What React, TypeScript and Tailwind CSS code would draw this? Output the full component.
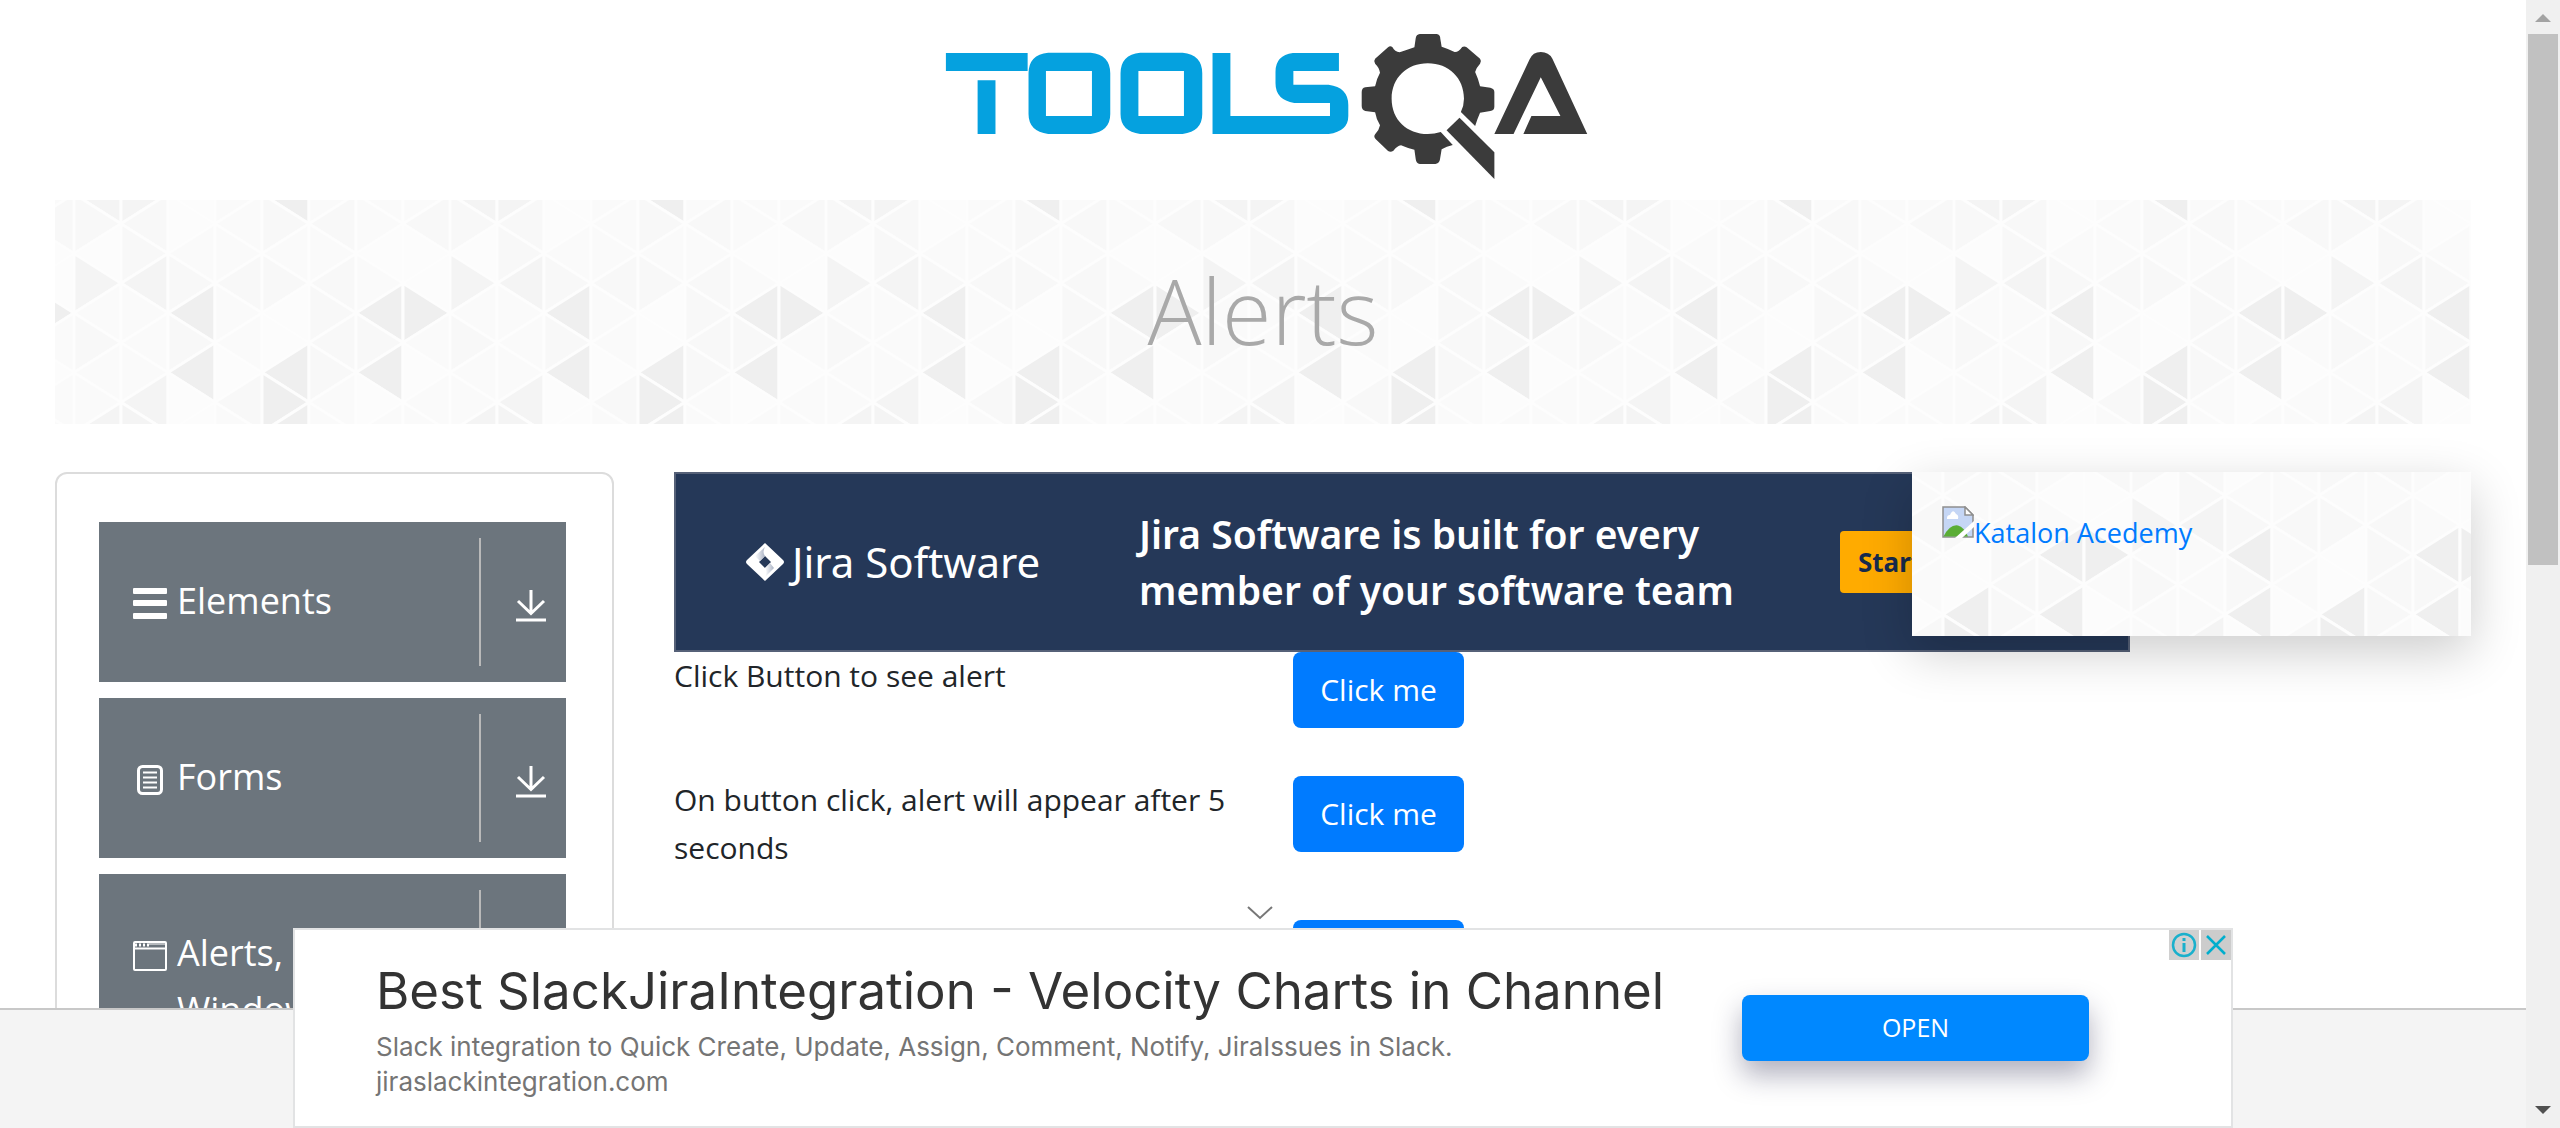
import React from "react";

const SHADES = ["#fcfcfc", "#fafafa", "#f8f8f8", "#f4f4f4", "#efefef"];

/* One entry per strip of the triangle tile, top to bottom. */
const STRIPS = [
  [3, 2, 0, 3, 1, 2, 1, 1],
  [3, 2, 2, 3, 1, 1, 1, 3],
  [0, 0, 1, 2, 4, 2, 4, 0],
  [1, 1, 1, 2, 1, 1, 0, 2],
  [4, 2, 1, 2, 0, 0, 4, 4],
  [1, 2, 1, 2, 2, 2, 2, 1],
  [1, 1, 0, 1, 4, 2, 4, 0],
  [1, 2, 0, 0, 4, 1, 0, 1],
];

function Triangles({ id, x, y }: { id: string; x: number; y: number }) {
  const w = 47;
  const h = 29.75;
  return (
    <svg className="absolute inset-0 h-full w-full" aria-hidden="true">
      <defs>
        <pattern id={id} x={x} y={y} width={w * 8} height={h * 8} patternUnits="userSpaceOnUse">
          <rect width={w * 8} height={h * 8} fill="#fcfcfc" />
          {STRIPS.map((strip, i) =>
            [...strip, strip[0]].map((shade, j) => {
              const near = i * w;
              const far = near + w;
              const [apex, base] = (i + j) % 2 === 0 ? [near, far] : [far, near];
              return (
                <path
                  key={`${i}-${j}`}
                  d={`M${apex} ${j * h}L${base} ${(j - 1) * h}V${(j + 1) * h}Z`}
                  fill={SHADES[shade]}
                  stroke="#fdfdfd"
                  strokeWidth="3"
                />
              );
            })
          )}
        </pattern>
      </defs>
      <rect width="100%" height="100%" fill={`url(#${id})`} />
    </svg>
  );
}

function Logo() {
  return (
    <svg viewBox="0 0 1536 510" preserveAspectRatio="none" className="h-[170px] w-[686px]" role="img" aria-label="ToolsQA">
      <g fill="#05a1df" fillRule="evenodd">
        <path d="M58 99H241V153H58ZM129 181H169V342H129Z" />
        <path d="M287 98H382Q426 104 426 160V282Q426 334 382 342H287Q243 334 243 282V160Q243 104 287 98ZM282 153V288H385V153Z" />
        <path d="M493 98H588Q632 104 632 160V282Q632 334 588 342H493Q449 334 449 282V160Q449 104 493 98ZM489 153V288H591V153Z" />
        <path d="M655 99H695V288H918V249H838Q796 240 796 190V155Q796 106 835 99H938V153H836V194H915Q959 202 959 255V288Q959 334 915 342H655Z" />
      </g>
      <g fill="#3b3b3b">
        <path
          fillRule="evenodd"
          d="M1119 42H1157Q1165 44 1165 56L1168 80Q1182 86 1197 96Q1206 97 1214 81Q1219 77 1224 82L1254 116Q1258 123 1254 131Q1246 142 1243 156Q1250 176 1254 199L1277 203Q1286 206 1286 216V260Q1286 271 1277 273L1254 278Q1248 296 1243 318L1211 276Q1218 257 1218 236C1218 174 1184 130 1137 130C1090 130 1056 174 1056 236C1056 299 1090 342 1137 342Q1152 342 1166 336L1193 375Q1179 379 1168 388L1164 420Q1162 431 1154 432H1119Q1111 430 1110 418L1107 389Q1090 384 1077 376Q1068 378 1060 392Q1054 398 1048 393L1020 357Q1015 350 1019 343Q1028 331 1030 316Q1022 300 1019 277L997 273Q989 270 989 258V216Q989 204 997 202L1019 199Q1022 177 1030 158Q1028 142 1019 131Q1015 123 1019 116L1048 82Q1053 76 1058 82Q1063 95 1074 97Q1090 90 1107 82L1110 54Q1111 44 1119 42Z"
        />
        <path d="M1208 293L1286 397V477L1179 331Z" />
        <path d="M1365 118Q1372 96 1390 96Q1408 96 1416 116L1494 342H1351L1369 288H1434L1390 172L1329 342H1286Z" />
      </g>
    </svg>
  );
}

function MenuIcon() {
  return (
    <svg viewBox="0 0 34 32" className="h-8 w-[34px]" fill="#fff" aria-hidden="true">
      <rect y="0" width="34" height="6" rx="1" />
      <rect y="12" width="34" height="6" rx="1" />
      <rect y="25" width="34" height="6" rx="1" />
    </svg>
  );
}

function FormIcon() {
  return (
    <svg viewBox="0 0 34 32" className="h-8 w-[34px]" fill="none" stroke="#fff" aria-hidden="true">
      <rect x="5.5" y="2.5" width="23" height="27" rx="4" strokeWidth="3" />
      <path d="M10 8.5H24M10 13.5H24M10 18.5H24M10 23.5H24" strokeWidth="2" />
    </svg>
  );
}

function WindowIcon() {
  return (
    <svg viewBox="0 0 34 32" className="h-8 w-[34px]" fill="none" stroke="#fff" aria-hidden="true">
      <rect x="1" y="2" width="32" height="28" rx="1" strokeWidth="2" />
      <path d="M1 8.5H33" strokeWidth="2" />
      <path d="M2 5H16" strokeWidth="3" strokeDasharray="2 2" />
      <path d="M16 4H32" strokeWidth="1" />
    </svg>
  );
}

function DownloadIcon() {
  return (
    <svg viewBox="0 0 30 32" className="h-8 w-[30px]" fill="none" stroke="#fff" strokeWidth="3" aria-hidden="true">
      <path d="M15 0V23M2 11L15 23.500L28 11M0 30H30" />
    </svg>
  );
}

function SideItem({ icon, label }: { icon: React.ReactNode; label: string }) {
  return (
    <button type="button" className="flex h-40 w-full shrink-0 items-start overflow-hidden bg-[#6c757d] text-left text-white">
      <span className="flex h-full flex-1 items-start gap-[10px] pl-[34px]">
        <span className="flex h-40 items-center pt-1">{icon}</span>
        <span className="flex-1 pt-[50px] text-[36px] leading-[57px]">{label}</span>
      </span>
      <span className="my-4 h-32 w-[2px] bg-[#b9b9b9]" />
      <span className="flex h-40 w-[85px] items-center justify-end pt-2 pr-5">
        <DownloadIcon />
      </span>
    </button>
  );
}

const ROWS = ["Click Button to see alert", "On button click, alert will appear after 5 seconds"];

function JiraBanner() {
  return (
    <a href="#jira" className="flex h-[180px] w-[1456px] items-center border-2 border-[#566178] bg-[#253858] font-['Noto_Sans',sans-serif] text-white">
      <span className="flex w-[463px] items-center gap-2 pl-[70px]">
        <svg viewBox="0 0 38 38" className="h-[38px] w-[38px]" aria-hidden="true">
          <defs>
            <linearGradient id="fold" x1="0" y1="0" x2="1" y2="0">
              <stop offset="0" stopColor="#fff" />
              <stop offset="1" stopColor="#a9b2c4" />
            </linearGradient>
          </defs>
          <path fillRule="evenodd" fill="#fff" d="M19 0L37 17Q39 19 37 21L19 38L1 21Q-1 19 1 17ZM19 13L13 19L19 25L25 19Z" />
          <path d="M19 4Q16 9 19 13L14 18L9 13Z" fill="url(#fold)" />
          <path d="M19 25L24 20L28 25L19 34Q22 29 19 25Z" fill="url(#fold)" />
        </svg>
        <span className="text-[42px] leading-[56px] whitespace-nowrap">Jira Software</span>
      </span>
      <span className="w-[701px] text-[39px] leading-[56px] font-semibold whitespace-nowrap">
        Jira Software is built for every
        <br />
        member of your software team
      </span>
      <span className="flex h-[62px] w-[220px] items-center rounded-sm bg-[#ffab00] pl-[18px] text-[26px] font-bold text-[#172b4d]">Start</span>
    </a>
  );
}

function BrokenImage() {
  return (
    <svg viewBox="0 0 32 32" className="h-8 w-8" aria-hidden="true">
      <path d="M1 1H23L31 9V31H1Z" fill="#c5d6f5" stroke="#8f8f8f" strokeWidth="1.500" />
      <path d="M5 12Q5 9 8 9Q11 2 14 8Q17 9 16 13H5Z" fill="#fff" />
      <path d="M1.500 30.500Q8 18 16 19.500Q22 21 26 30.500Z" fill="#5aad35" />
      <path d="M23 1V9H31Z" fill="#fff" stroke="#8f8f8f" strokeWidth="1.500" />
      <path d="M32 15V21L20 32H13Z" fill="#fff" />
    </svg>
  );
}

function BottomAd() {
  return (
    <aside className="absolute inset-x-0 bottom-0 mx-auto flex h-[200px] w-[1940px] max-w-full items-center border-2 border-[#e2e3e4] bg-white">
      <button type="button" aria-label="Collapse" className="absolute -top-6 right-1.5 left-0 mx-auto flex w-8 justify-center">
        <svg viewBox="0 0 26 14" className="h-[14px] w-[26px]" fill="none" stroke="#777" strokeWidth="2" aria-hidden="true">
          <path d="M1 1L13 12L25 1" />
        </svg>
      </button>
      <div className="min-w-0 flex-1 pl-[81px] font-['Inter',sans-serif]">
        <h2 className="pt-1 text-[51px] leading-[60px] whitespace-nowrap text-[#333]">Best SlackJiraIntegration - Velocity Charts in Channel</h2>
        <p className="mt-2 text-[26px] leading-[35px] whitespace-nowrap text-[#757575]">
          Slack integration to Quick Create, Update, Assign, Comment, Notify, JiraIssues in Slack.
          <br />
          jiraslackintegration.com
        </p>
      </div>
      <button type="button" className="mr-[142px] h-[66px] w-[347px] shrink-0 rounded-lg bg-[#0088ff] font-['Open_Sans',sans-serif] text-[25px] text-white shadow-[0_14px_28px_rgba(30,30,70,0.35)]">
        OPEN
      </button>
      <div className="absolute top-0 right-0 flex gap-[2px]">
        <button type="button" aria-label="Ad information" className="flex size-[30px] items-center justify-center bg-[#d0d0d0]">
          <svg viewBox="0 0 26 26" className="size-[26px]" fill="none" stroke="#19b0cc" strokeWidth="2.500" aria-hidden="true">
            <circle cx="13" cy="13" r="11" />
            <path d="M13 11V20M13 6V9" strokeWidth="3" />
          </svg>
        </button>
        <button type="button" aria-label="Close ad" className="flex size-[30px] items-center justify-center bg-[#ccc]">
          <svg viewBox="0 0 20 20" className="size-5" fill="none" stroke="#00aecd" strokeWidth="2.500" aria-hidden="true">
            <path d="M1 1L19 19M19 1L1 19" />
          </svg>
        </button>
      </div>
    </aside>
  );
}

function Scrollbar() {
  return (
    <div className="flex w-[34px] shrink-0 flex-col items-center bg-[#f0f0f0]">
      <svg viewBox="0 0 34 34" className="h-[34px] w-[34px]" aria-hidden="true">
        <path d="M17 14L25 22H9Z" fill="#a3a3a3" />
      </svg>
      <div className="h-[531px] w-[30px] bg-[#c1c1c1]" />
      <svg viewBox="0 0 34 34" className="mt-auto h-[34px] w-[34px]" aria-hidden="true">
        <path d="M17 20L25 12H9Z" fill="#505050" />
      </svg>
    </div>
  );
}

export default function App() {
  return (
    <div className="flex h-screen overflow-hidden bg-white font-['Open_Sans','Noto_Sans',sans-serif] text-[#212529]">
      <div className="relative min-w-0 flex-1 overflow-hidden">
        <header className="flex justify-center pt-5 pb-[10px]">
          <a href="#home">
            <Logo />
          </a>
        </header>
        <div className="px-[55px]">
          <div className="relative flex h-56 items-center justify-center">
            <Triangles id="banner" x={19} y={-6} />
            <h1 className="relative pb-1 text-[90px] leading-[110px] font-light text-[#a9a9a9]">Alerts</h1>
          </div>
          <div className="mt-12 flex gap-[60px]">
            <nav className="flex h-[900px] w-[559px] shrink-0 flex-col gap-4 rounded-xl border-2 border-[#dcdcdc] pt-12 pr-[46px] pl-[42px]">
              <SideItem icon={<MenuIcon />} label="Elements" />
              <SideItem icon={<FormIcon />} label="Forms" />
              <SideItem icon={<WindowIcon />} label="Alerts, Frame & Windows" />
            </nav>
            <main className="relative min-w-0 flex-1">
              <JiraBanner />
              <div className="flex flex-col gap-12 text-[30px] leading-[48px]">
                {ROWS.map((row) => (
                  <div key={row} className="flex items-start gap-[60px]">
                    <span className="w-[559px]">{row}</span>
                    <button type="button" className="h-[76px] w-[171px] rounded-lg bg-[#007bff] text-white">
                      Click me
                    </button>
                  </div>
                ))}
                <button type="button" aria-label="Click me" className="ml-[619px] h-[76px] w-[171px] rounded-lg bg-[#007bff]" />
              </div>
              <div className="absolute top-0 right-0 h-[164px] w-[559px] shadow-[0_16px_48px_rgba(0,0,0,0.2)]">
                <Triangles id="card" x={-157} y={-36} />
                <a href="#katalon" className="relative flex items-start px-[30px] pt-[34px] text-[27px] leading-[54px] text-[#007bff]">
                  <BrokenImage />
                  Katalon Acedemy
                </a>
              </div>
            </main>
          </div>
        </div>
        <div className="absolute inset-x-0 bottom-0 h-[120px] border-t-2 border-[#c8c8c8] bg-[#f4f4f4]" />
        <BottomAd />
      </div>
      <Scrollbar />
    </div>
  );
}
